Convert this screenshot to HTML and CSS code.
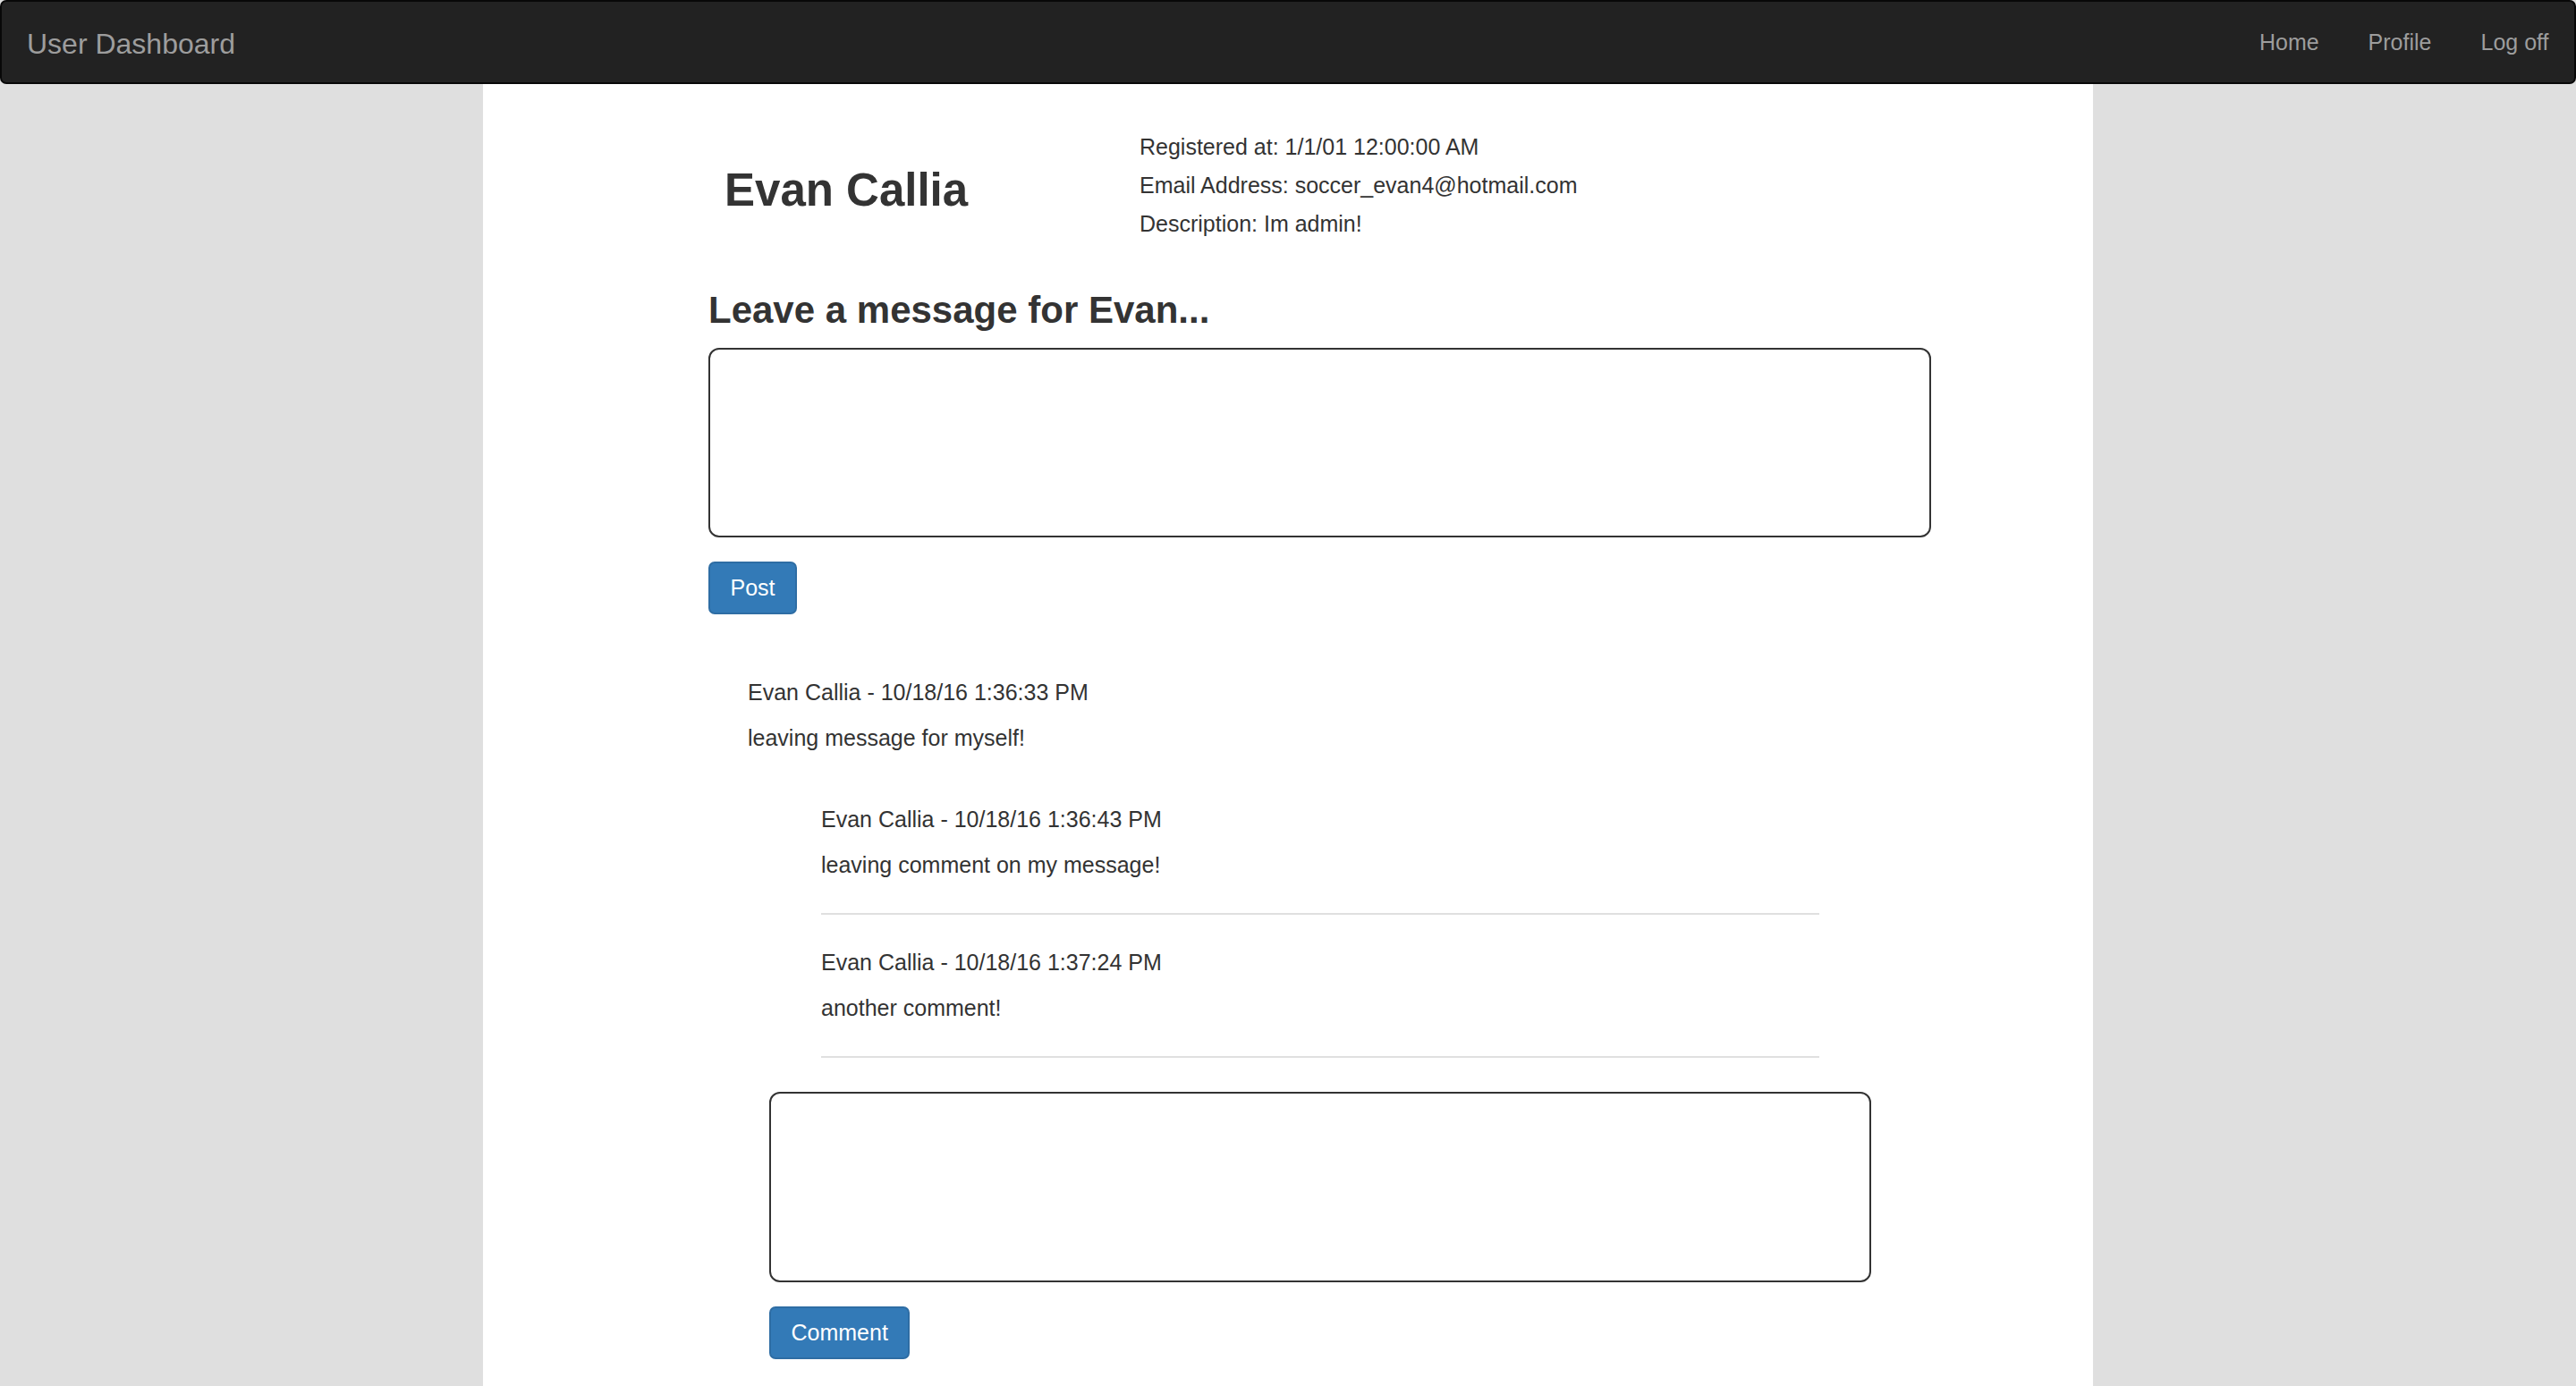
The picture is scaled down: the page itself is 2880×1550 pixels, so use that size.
FILE: index.html
```html
<!DOCTYPE html>
<html lang="en">
<head>
<meta charset="utf-8">
<title>User Dashboard</title>
<link rel="stylesheet" href="styles.css">
</head>
<body>
<nav class="navbar">
  <a class="brand" href="#">User Dashboard</a>
  <ul class="nav-links">
    <li><a href="#">Home</a></li>
    <li><a href="#">Profile</a></li>
    <li><a href="#">Log off</a></li>
  </ul>
</nav>
<main class="panel">
  <div class="content">
    <header class="profile">
      <h2 class="name">Evan Callia</h2>
      <div class="info">
        <p>Registered at: 1/1/01 12:00:00 AM</p>
        <p>Email Address: soccer_evan4@hotmail.com</p>
        <p>Description: Im admin!</p>
      </div>
    </header>
    <h3 class="leave">Leave a message for Evan...</h3>
    <form class="post-form">
      <textarea class="box main-box"></textarea>
      <button type="button" class="btn">Post</button>
    </form>
    <section class="message">
      <div class="meta">Evan Callia - 10/18/16 1:36:33 PM</div>
      <div class="text">leaving message for myself!</div>
      <div class="comments">
        <div class="comment">
          <div class="meta">Evan Callia - 10/18/16 1:36:43 PM</div>
          <div class="text">leaving comment on my message!</div>
          <hr class="rule">
        </div>
        <div class="comment">
          <div class="meta">Evan Callia - 10/18/16 1:37:24 PM</div>
          <div class="text">another comment!</div>
          <hr class="rule">
        </div>
      </div>
      <form class="comment-form">
        <textarea class="box comment-box"></textarea>
        <button type="button" class="btn comment-btn">Comment</button>
      </form>
    </section>
  </div>
</main>
</body>
</html>
```
FILE: styles.css
```css
* { box-sizing: border-box; }
html, body { margin: 0; padding: 0; }
body {
  background: #dfdfdf;
  font-family: "Liberation Sans", Arial, Helvetica, sans-serif;
  color: #333;
  min-height: 100vh;
  display: flex;
  flex-direction: column;
}
.navbar {
  height: 94px;
  background: #222;
  border: 2px solid #080808;
  border-radius: 7px;
  display: flex;
  align-items: center;
  justify-content: space-between;
  padding: 0 1px 0 28px;
  flex: none;
}
.brand {
  color: #9d9d9d;
  font-size: 32px;
  line-height: 32px;
  text-decoration: none;
  padding-top: 3px;
}
.nav-links {
  list-style: none;
  margin: 0;
  padding: 0;
  display: flex;
}
.nav-links a {
  display: block;
  color: #9d9d9d;
  font-size: 25px;
  line-height: 25px;
  text-decoration: none;
  padding: 0 27.5px;
}
.panel {
  width: 1800px;
  margin: 0 auto;
  background: #fff;
  flex: 1;
}
.content {
  margin-left: 252px;
  width: 1367px;
  padding-bottom: 40px;
}
.profile {
  display: grid;
  grid-template-columns: 482px 1fr;
  padding-top: 49px;
}
.name {
  margin: 44px 0 0 18px;
  font-size: 51px;
  line-height: 52px;
  font-weight: bold;
}
.info p {
  margin: 0;
  font-size: 25px;
  line-height: 43px;
}
.leave {
  margin: 52px 0 0 0;
  font-size: 42px;
  line-height: 46px;
  font-weight: bold;
}
.box {
  display: block;
  height: 212px;
  border: 2px solid #333;
  border-radius: 12px;
  background: #fff;
  resize: none;
  outline: none;
}
.main-box {
  width: 1367px;
  margin-top: 19px;
}
.btn {
  display: block;
  margin-top: 27px;
  height: 59px;
  padding: 0 22.5px;
  background: #337ab7;
  border: 2px solid #2e6da4;
  border-radius: 7px;
  color: #fff;
  font-family: inherit;
  font-size: 25px;
  line-height: 55px;
}
.message {
  margin: 69px 0 0 44px;
}
.meta, .text {
  font-size: 25px;
  line-height: 36px;
}
.meta { margin-bottom: 15px; }
.comments {
  margin: 20px 0 0 82px;
  width: 1116px;
}
.comment { padding-top: 35px; }
.rule {
  margin: 36px 0 0 0;
  border: 0;
  height: 2px;
  background: #e0e0e0;
}
.comment-form {
  margin: 38px 0 0 24px;
}
.comment-box { width: 1232px; height: 213px; }
.comment-btn { margin-top: 27px; }
```
